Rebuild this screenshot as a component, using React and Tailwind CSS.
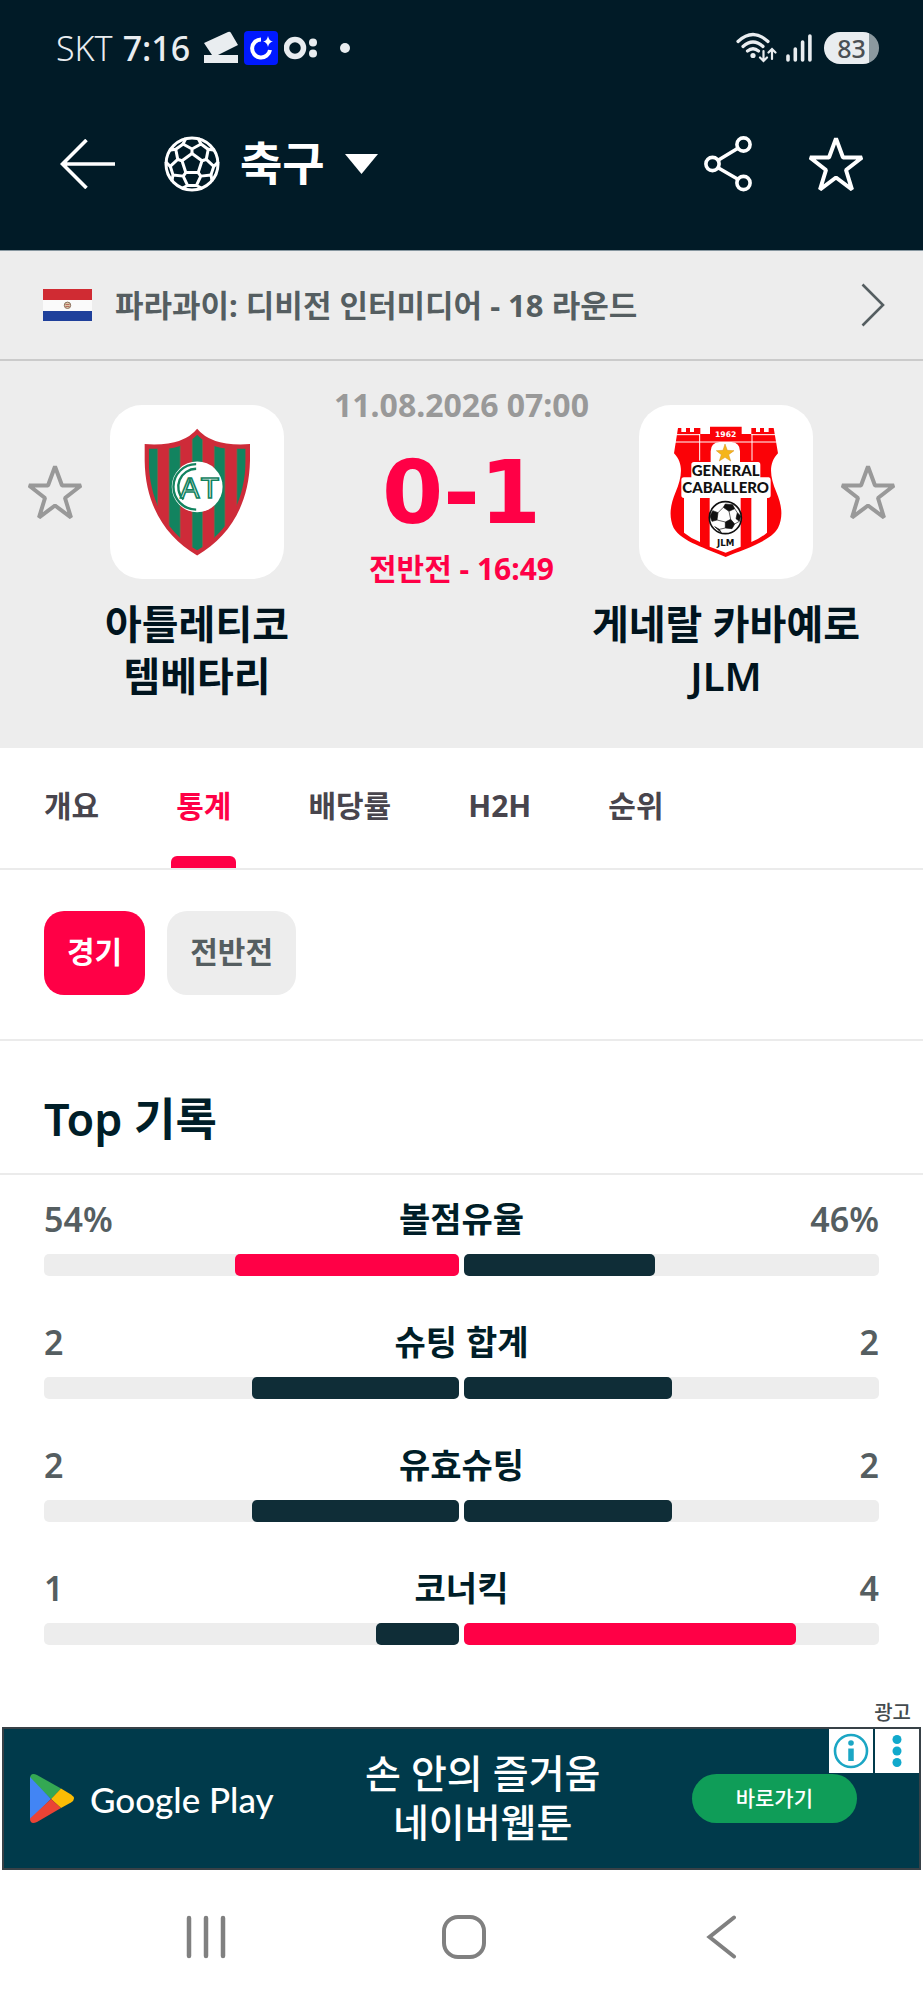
import React from 'react';

const tabs = ['개요', '통계', '배당률', 'H2H', '순위'];

const stats = [
  { label: '볼점유율', home: '54%', away: '46%', homeShare: 54, awayShare: 46 },
  { label: '슈팅 합계', home: '2', away: '2', homeShare: 50, awayShare: 50 },
  { label: '유효슈팅', home: '2', away: '2', homeShare: 50, awayShare: 50 },
  { label: '코너킥', home: '1', away: '4', homeShare: 20, awayShare: 80 },
];

const StarIcon = ({ className }) => (
  <svg viewBox="0 0 54 54" className={className} fill="none" stroke="currentColor" strokeWidth="4" strokeLinejoin="bevel">
    <path d="M27 1.500 L34 20.500 H53 L37 33 L43 52.500 L27 40.500 L11 52.500 L17 33 L1 20.500 H20 Z" />
  </svg>
);

const BallIcon = () => (
  <svg viewBox="-28 -28 56 56" className="size-14" fill="none" stroke="currentColor" strokeWidth="3" strokeLinejoin="round">
    <circle r="26" />
    <path d="M0 -10.500 L10 -3.200 L6.200 8.500 H-6.200 L-10 -3.200 Z" />
    {[0, 72, 144, 216, 288].map((angle) => (
      <g key={angle} transform={`rotate(${angle})`}>
        <path d="M0 -10.500 V-15.500 M-6 -26 L-9 -20 L0 -15 L9 -20 L6 -26 M9 -20 L16 -14.800" />
      </g>
    ))}
  </svg>
);

const StatusBar = () => (
  <div className="flex h-24 items-center justify-between pl-14 pr-11 text-[#e9edf0]">
    <div className="flex items-center gap-[6px]">
      <span className="text-[34px] leading-10 font-light">SKT</span>
      <span className="ml-1 text-[34px] leading-10 font-medium">7:16</span>
      <svg viewBox="0 0 34 34" className="ml-2 size-[34px]" fill="currentColor">
        <path d="M0 12 L24 1 Q26 0 27 2 L34 14 L14 24 H34 V32 H0 V24 H8 L0 12 Z" />
      </svg>
      <svg viewBox="0 0 34 34" className="size-[34px]">
        <rect width="34" height="34" rx="4" fill="#0019ff" />
        <path d="M17 8.500 A9 9 0 1 0 26 19" fill="none" stroke="white" strokeWidth="4" />
        <path d="M24 5 Q25 10 29 10.500 Q25 11 24 16 Q23 11 19 10.500 Q23 10 24 5 Z" fill="white" />
      </svg>
      <svg viewBox="0 0 34 34" className="size-[34px]" fill="currentColor">
        <circle cx="11" cy="17" r="8.500" fill="none" stroke="currentColor" strokeWidth="5.500" />
        <circle cx="29" cy="11.500" r="4" />
        <circle cx="29" cy="22.500" r="4" />
      </svg>
      <span className="ml-4 size-[10px] rounded-full bg-[#e9edf0]" />
    </div>
    <div className="flex items-center">
      <svg viewBox="0 0 42 32" className="w-[42px]" fill="none" stroke="currentColor" strokeWidth="3.200" strokeLinecap="round">
        <path d="M2 9.500 Q17 -4.500 32 9.500 M7 14.500 Q17 5.500 27 14.500 M11.500 19 Q17 14.500 22.500 19" />
        <circle cx="17" cy="23.500" r="2.600" fill="currentColor" stroke="none" />
        <path d="M27.500 19 V28 M24 25.500 L27.500 29 L31 25.500 M36 27 V18 M32.500 20.500 L36 17 L39.500 20.500" strokeWidth="2.200" />
      </svg>
      <svg viewBox="0 0 26 32" className="ml-2 w-[26px]" stroke="currentColor" strokeWidth="3.600" strokeLinecap="round">
        <path d="M2 24 V28 M9.300 17 V28 M16.600 10 V28 M23.900 4 V28" />
      </svg>
      <span className="ml-3 flex h-8 w-[55px] items-center justify-center rounded-full bg-linear-to-r from-[#e9edf0] from-81% to-[#8b999f] to-81% text-[25px] leading-8 font-medium text-[#4b5054]">
        83
      </span>
    </div>
  </div>
);

const Header = () => (
  <header className="bg-[#011b27] pb-[58px] text-white">
    <StatusBar />
    <div className="flex items-center justify-between px-[60px] pt-10">
      <div className="flex items-center">
        <button aria-label="뒤로">
          <svg viewBox="0 0 56 50" className="w-14" fill="none" stroke="currentColor" strokeWidth="3.600">
            <path d="M26.500 1 L2.500 25 L26.500 49 M2.500 25 H55" />
          </svg>
        </button>
        <button className="ml-12 flex items-center">
          <BallIcon />
          <span className="ml-5 pb-1 text-[46px] leading-[50px] font-bold">축구</span>
          <svg viewBox="0 0 33 20" className="ml-5 w-[33px]" fill="currentColor">
            <path d="M0 0 H33 L16.500 20 Z" />
          </svg>
        </button>
      </div>
      <div className="flex items-center gap-[57px]">
        <button aria-label="공유">
          <svg viewBox="0 0 48 56" className="w-12" fill="none" stroke="currentColor" strokeWidth="3.600">
            <circle cx="8.500" cy="28" r="6.600" />
            <circle cx="39.500" cy="8.500" r="6.600" />
            <circle cx="39.500" cy="47" r="6.600" />
            <path d="M14.500 24 L33.500 12.500 M14.500 32 L33.500 43" />
          </svg>
        </button>
        <button aria-label="즐겨찾기">
          <StarIcon className="size-[54px]" />
        </button>
      </div>
    </div>
  </header>
);

const LeagueRow = () => (
  <a href="#league" className="flex items-center justify-between border-t border-b-2 border-t-[#8797a0] border-b-[#cbcbcb] bg-[#ededed] py-8 pr-[38px] pl-[43px] text-[#555e61]">
    <span className="flex items-center gap-[23px]">
      <svg viewBox="0 0 49 32" className="w-[49px]">
        <rect width="49" height="32" fill="#fafafa" />
        <rect width="49" height="11" fill="#d02b33" />
        <rect y="22" width="49" height="10" fill="#1f409b" />
        <circle cx="24.500" cy="16.300" r="3.200" fill="#d9c9a8" stroke="#8a6f5e" strokeWidth="1" />
        <path d="M22.500 15.500 H26.500 M22.500 17.500 H26.500" stroke="#b0504c" strokeWidth="0.800" />
      </svg>
      <span className="text-[31px] leading-[42px] font-bold">파라과이: 디비전 인터미디어 - 18 라운드</span>
    </span>
    <svg viewBox="0 0 24 44" className="w-6" fill="none" stroke="currentColor" strokeWidth="2.600">
      <path d="M1.500 1.500 L22 22 L1.500 42.500" />
    </svg>
  </a>
);

const TembetaryCrest = () => (
  <svg viewBox="40 52 320 384" className="w-[107px]">
    <defs>
      <clipPath id="shield">
        <path d="M199 72 Q162 112 100 114 H54 V150 C56 275 112 368 199 418 C286 368 342 275 344 150 V114 H298 Q236 112 199 72 Z" />
      </clipPath>
    </defs>
    <path d="M199 54 Q155 108 42 100 V150 C44 285 105 378 199 433 C293 378 354 285 357 150 V100 Q243 108 199 54 Z" fill="#ce2b39" />
    <g fill="#12835f" stroke="#7a6a4c" strokeWidth="2" clipPath="url(#shield)">
      <rect x="54" y="50" width="27" height="240" />
      <rect x="115" y="50" width="33" height="340" />
      <rect x="184" y="50" width="31" height="390" />
      <rect x="250" y="50" width="32" height="340" />
      <rect x="318" y="50" width="27" height="240" />
    </g>
    <circle cx="199" cy="228" r="76" fill="white" />
    <g fill="none" stroke="#12835f" strokeWidth="7">
      <path d="M196 160 A68 68 0 0 0 196 296" />
      <path d="M196 174 A54 54 0 0 0 158 266" />
    </g>
    <g fontFamily="Liberation Sans" fill="white" stroke="#12835f" strokeWidth="5" textAnchor="middle">
      <text x="177" y="262" fontSize="86">A</text>
      <text x="237" y="262" fontSize="90">T</text>
    </g>
  </svg>
);

const CaballeroCrest = () => (
  <svg viewBox="626 132 336 396" className="w-28">
    <path d="M650 138 H660 V150 H674 V138 H686 V150 H698 V138 H717 V156 H746 V134 H841 V156 H870 V138 H884 V150 H896 V138 H908 V150 H922 V138 H937 L950 214 C920 245 926 285 945 330 C962 370 966 405 950 438 C925 480 850 500 793 525 C738 500 662 480 637 438 C622 405 626 370 643 330 C662 285 668 245 638 214 Z" fill="#fb0207" />
    <path d="M645 158 H716 M640 180 H946 M870 158 H942 M715 156 V236 M872 156 V236" stroke="white" strokeWidth="3" />
    <path d="M668 345 H716 V480 Q690 470 668 452 Z M870 345 H917 V452 Q896 470 870 480 Z M745 345 H838 V494 L793 512 L745 494 Z" fill="white" />
    <path d="M748 240 V208 Q748 182 775 180 H810 Q836 182 836 208 V240 H890 Q897 240 897 248 V286 H922 Q928 286 928 294 V340 Q928 348 920 348 H668 Q660 348 660 340 V294 Q660 286 668 286 H690 V248 Q690 240 698 240 Z" fill="white" />
    <path d="M791 186 L798 205 L818 206 L802 218 L808 237 L791 226 L774 237 L780 218 L765 206 L785 205 Z" fill="#f5b51b" stroke="#d8901a" strokeWidth="1.500" />
    <g textAnchor="middle" fontWeight="700" fill="#111">
      <text x="793" y="165" fontSize="23" fontFamily="DejaVu Sans" fill="white">1962</text>
      <text x="793" y="282" fontSize="45" fontFamily="Lato" fontWeight="900">GENERAL</text>
      <text x="793" y="334" fontSize="45" fontFamily="Lato" fontWeight="900">CABALLERO</text>
      <text x="793" y="491" fontSize="26" fontFamily="DejaVu Sans">JLM</text>
    </g>
    <circle cx="792" cy="407" r="48" fill="white" stroke="#111" strokeWidth="5" />
    <g fill="#111" stroke="#111" strokeWidth="2">
      <path d="M792 366 L814 368 L820 380 L803 388 L786 376 Z" />
      <path d="M754 386 L770 392 L767 414 L752 418 L746 402 Z" />
      <path d="M792 420 L808 412 L820 426 L812 440 L792 438 Z" />
      <path d="M828 392 L838 402 L834 418 L824 410 Z" />
      <path d="M760 434 L774 442 L780 452 Z" />
      <path d="M786 376 L770 392 M767 414 L792 420 M803 388 L808 412 M820 426 L834 418 M820 380 L828 392 M792 438 L774 442" fill="none" />
    </g>
  </svg>
);

const MatchPanel = () => (
  <section className="bg-[#ededed] px-7 pt-7 pb-[46px]">
    <div className="flex items-start">
      <div className="flex items-center gap-7 pt-4">
        <button aria-label="홈팀 즐겨찾기" className="text-[#999999]">
          <StarIcon className="size-[54px]" />
        </button>
        <div className="flex size-[174px] items-center justify-center rounded-[32px] bg-white">
          <TembetaryCrest />
        </div>
      </div>
      <div className="flex flex-1 flex-col items-center">
        <time className="text-[32px] leading-8 font-bold text-[#999999]">11.08.2026 07:00</time>
        <div className="mt-[27px] font-['DejaVu_Sans'] text-[88px] leading-[90px] font-bold text-[#ff0046]">0-1</div>
        <div className="mt-[10px] text-[30px] leading-[42px] font-bold text-[#ff0046]">전반전 - 16:49</div>
      </div>
      <div className="flex items-center gap-7 pt-4">
        <div className="flex size-[174px] items-center justify-center rounded-[32px] bg-white">
          <CaballeroCrest />
        </div>
        <button aria-label="원정팀 즐겨찾기" className="text-[#999999]">
          <StarIcon className="size-[54px]" />
        </button>
      </div>
    </div>
    <div className="mt-2 flex justify-between px-8 text-center text-[40px] leading-[52px] font-semibold text-[#00141e]">
      <h2 className="w-[274px]">아틀레티코<br />템베타리</h2>
      <h2 className="w-[274px]">게네랄 카바예로<br />JLM</h2>
    </div>
  </section>
);

const Tabs = () => (
  <nav className="flex gap-[67px] border-b-2 border-[#ebebeb] px-[39px] text-[30px] font-bold">
    {tabs.map((tab) => (
      <button
        key={tab}
        className={`relative px-[5px] pt-[37px] pb-[41px] leading-[42px] ${tab === '통계' ? 'text-[#ff0046]' : 'text-[#48454d]'}`}
      >
        {tab}
        {tab === '통계' && <span className="absolute inset-x-0 bottom-0 h-3 rounded-t-md bg-[#ff0046]" />}
      </button>
    ))}
  </nav>
);

const PeriodFilter = () => (
  <div className="flex gap-[22px] border-b-2 border-[#ebebeb] px-11 pt-[41px] pb-11 text-[30px] leading-[42px] font-bold">
    <button className="rounded-[20px] bg-[#ff0046] px-[23px] pt-5 pb-[22px] text-white">경기</button>
    <button className="rounded-[20px] bg-[#ededed] px-[23px] pt-5 pb-[22px] text-[#555e61]">전반전</button>
  </div>
);

const Bar = ({ share, leading, side }) => (
  <div className={`flex h-[22px] flex-1 rounded-[5px] bg-[#ededed] ${side === 'home' ? 'justify-end' : ''}`}>
    <div className={`rounded-[5px] ${leading ? 'bg-[#ff0046]' : 'bg-[#0f2d37]'}`} style={{ width: `${share}%` }} />
  </div>
);

const StatRow = ({ label, home, away, homeShare, awayShare }) => (
  <div>
    <div className="flex items-center text-[34px] leading-10 font-bold text-[#555e61]">
      <span className="flex-1 font-semibold">{home}</span>
      <span className="text-[#001e28]">{label}</span>
      <span className="flex-1 text-right font-semibold">{away}</span>
    </div>
    <div className="mt-[15px] flex gap-[5px]">
      <Bar share={homeShare} leading={homeShare > awayShare} side="home" />
      <Bar share={awayShare} leading={awayShare > homeShare} side="away" />
    </div>
  </div>
);

const AdBanner = () => (
  <aside>
    <div className="px-3 text-right text-[20px] leading-7 font-medium text-[#444b4e]">광고</div>
    <div className="relative mx-[2px] flex h-[143px] items-center justify-between border-2 border-[#384147] bg-[#003a4b] pr-[62px] pl-[26px] text-white">
      <div className="flex items-center gap-4">
        <svg viewBox="0 0 44 49" className="w-11">
          <path d="M0 5 Q0 -2 7 1 L31 14.500 L21 25 L0 5 Z" fill="#34a853" />
          <path d="M0 3 L21 25 L0 46 Z" fill="#4285f4" />
          <path d="M31 14.500 L41 20.500 Q47 24.500 41 28.500 L31 34 L21 25 Z" fill="#fbbc04" />
          <path d="M21 25 L31 34 L7 48 Q0 51 0 44.500 Z" fill="#ea4335" />
        </svg>
        <span className="font-[Lato] text-[35px] leading-10 font-medium">Google Play</span>
      </div>
      <p className="pb-1 text-center text-[39px] leading-[49px] font-medium">손 안의 즐거움<br />네이버웹툰</p>
      <a href="#install" className="rounded-full bg-[#0f9d58] px-11 py-[10px] text-[21px] leading-[29px] font-medium">바로가기</a>
      <div className="absolute top-0 right-0 flex gap-[2px]">
        <button aria-label="광고 정보" className="bg-white">
          <svg viewBox="0 0 44 44" className="size-11" fill="none" stroke="#1ba6c4">
            <circle cx="22" cy="22" r="16" strokeWidth="2.600" />
            <circle cx="22" cy="14" r="2.800" fill="#1ba6c4" stroke="none" />
            <path d="M22 19.500 V32" strokeWidth="5.500" />
          </svg>
        </button>
        <button aria-label="광고 메뉴" className="bg-white">
          <svg viewBox="0 0 44 44" className="size-11" fill="#11a9cc">
            <circle cx="22" cy="10.500" r="4.500" />
            <circle cx="22" cy="22" r="4.500" />
            <circle cx="22" cy="33.500" r="4.500" />
          </svg>
        </button>
      </div>
    </div>
  </aside>
);

const SystemNav = () => (
  <div className="flex h-[130px] items-center justify-center gap-[214px] pt-1 pl-1 text-[#808080]">
    <button aria-label="최근 앱">
      <svg viewBox="0 0 44 44" className="size-11" stroke="currentColor" strokeWidth="4.500" strokeLinecap="round">
        <path d="M5 3 V41 M22 3 V41 M39 3 V41" />
      </svg>
    </button>
    <button aria-label="홈">
      <svg viewBox="0 0 44 44" className="size-11" fill="none" stroke="currentColor" strokeWidth="4">
        <rect x="2" y="2" width="40" height="40" rx="14" />
      </svg>
    </button>
    <button aria-label="뒤로">
      <svg viewBox="0 0 44 44" className="size-11" fill="none" stroke="currentColor" strokeWidth="4" strokeLinecap="round">
        <path d="M34 2.500 L9.500 22 L34 41.500" />
      </svg>
    </button>
  </div>
);

const App = () => (
  <div className="min-h-screen bg-white font-['Noto_Sans','Noto_Sans_CJK_KR',sans-serif]">
    <Header />
    <LeagueRow />
    <MatchPanel />
    <Tabs />
    <PeriodFilter />
    <h1 className="border-b-2 border-[#ebebeb] px-11 pt-[51px] pb-[27px] text-[45px] leading-[54px] font-semibold text-[#001e28]">
      Top 기록
    </h1>
    <section className="flex flex-col gap-[46px] px-11 pt-6 pb-[54px]">
      {stats.map((stat) => (
        <StatRow key={stat.label} {...stat} />
      ))}
    </section>
    <AdBanner />
    <SystemNav />
  </div>
);

export default App;
